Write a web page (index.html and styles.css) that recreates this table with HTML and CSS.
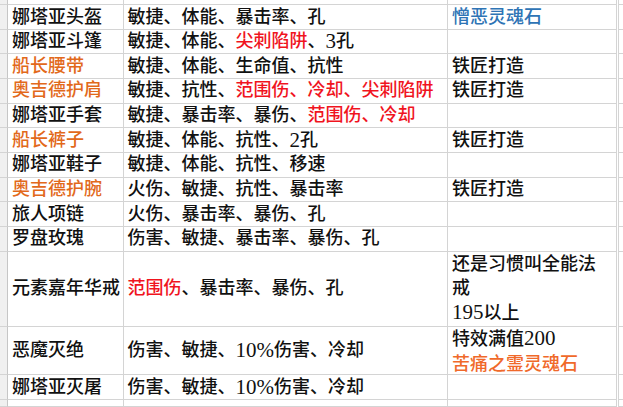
FILE: index.html
```html
<!DOCTYPE html>
<html lang="zh-CN">
<head>
<meta charset="utf-8">
<title>装备表</title>
<link rel="stylesheet" href="styles.css">
</head>
<body>
<div class="sheet">
  <div class="hd"></div><div class="c"></div><div class="c"></div><div class="c"></div><div class="c edge"></div>

  <div class="hd"></div><div class="c">娜塔亚头盔</div><div class="c">敏捷、体能、暴击率、孔</div><div class="c blue">憎恶灵魂石</div><div class="c edge"></div>

  <div class="hd"></div><div class="c">娜塔亚斗篷</div><div class="c">敏捷、体能、<span class="red">尖刺陷阱</span>、<span class="num">3</span>孔</div><div class="c"></div><div class="c edge"></div>

  <div class="hd"></div><div class="c orange">船长腰带</div><div class="c">敏捷、体能、生命值、抗性</div><div class="c">铁匠打造</div><div class="c edge"></div>

  <div class="hd"></div><div class="c orange">奥吉德护肩</div><div class="c">敏捷、抗性、<span class="red">范围伤、冷却、尖刺陷阱</span></div><div class="c">铁匠打造</div><div class="c edge"></div>

  <div class="hd"></div><div class="c">娜塔亚手套</div><div class="c">敏捷、暴击率、暴伤、<span class="red">范围伤、冷却</span></div><div class="c"></div><div class="c edge"></div>

  <div class="hd"></div><div class="c orange">船长裤子</div><div class="c">敏捷、体能、抗性、<span class="num">2</span>孔</div><div class="c">铁匠打造</div><div class="c edge"></div>

  <div class="hd"></div><div class="c">娜塔亚鞋子</div><div class="c">敏捷、体能、抗性、移速</div><div class="c"></div><div class="c edge"></div>

  <div class="hd"></div><div class="c orange">奥吉德护腕</div><div class="c">火伤、敏捷、抗性、暴击率</div><div class="c">铁匠打造</div><div class="c edge"></div>

  <div class="hd"></div><div class="c">旅人项链</div><div class="c">火伤、暴击率、暴伤、孔</div><div class="c"></div><div class="c edge"></div>

  <div class="hd"></div><div class="c">罗盘玫瑰</div><div class="c">伤害、敏捷、暴击率、暴伤、孔</div><div class="c"></div><div class="c edge"></div>

  <div class="hd"></div><div class="c">元素嘉年华戒</div><div class="c"><span class="red">范围伤</span>、暴击率、暴伤、孔</div><div class="c"><div class="wrap">还是习惯叫全能法戒<br><span class="num">195</span>以上</div></div><div class="c edge"></div>

  <div class="hd"></div><div class="c">恶魔灭绝</div><div class="c">伤害、敏捷、<span class="num">10%</span>伤害、冷却</div><div class="c top"><div class="wrap">特效满值<span class="num">200</span><br><span class="orange2">苦痛之霊灵魂石</span></div></div><div class="c edge"></div>

  <div class="hd"></div><div class="c">娜塔亚灭屠</div><div class="c">伤害、敏捷、<span class="num">10%</span>伤害、冷却</div><div class="c"></div><div class="c edge"></div>

  <div class="hd"></div><div class="c"></div><div class="c"></div><div class="c"></div><div class="c edge"></div>
</div>
</body>
</html>
```

FILE: styles.css
```css
html, body {
  margin: 0;
  padding: 0;
  background: #ffffff;
}

body {
  width: 623px;
  height: 407px;
  overflow: hidden;
  font-family: "Liberation Serif", "Noto Sans CJK SC", serif;
  font-size: 18px;
  font-weight: 500;
  color: #111111;
}

.sheet {
  display: grid;
  grid-template-columns: 8px 115.5px 324.5px 169px 1fr;
  grid-template-rows: 5px repeat(10, 24.67px) 75.33px 48.33px 24.67px 1fr;
  height: 407px;
}

.c {
  box-sizing: border-box;
  border-right: 1px solid #d4d4d4;
  border-bottom: 1px solid #d4d4d4;
  padding: 0 4px;
  display: flex;
  align-items: center;
  white-space: nowrap;
  line-height: 24.67px;
}

.c.top {
  align-items: flex-start;
}

.hd {
  box-sizing: border-box;
  background: #f0f0f0;
  border-right: 1px solid #c6c6c6;
  border-bottom: 1px solid #d4d4d4;
}

.edge {
  border-left: 1px solid #d4d4d4;
  margin-left: 1px;
}

.wrap {
  white-space: normal;
  width: 100%;
  line-height: 24.67px;
}

.num {
  font-size: 21px;
  line-height: 1;
}

.red { color: #f0141e; }
.orange { color: #e2691b; }
.orange2 { color: #f0692a; }
.blue { color: #2e74b5; }
```
